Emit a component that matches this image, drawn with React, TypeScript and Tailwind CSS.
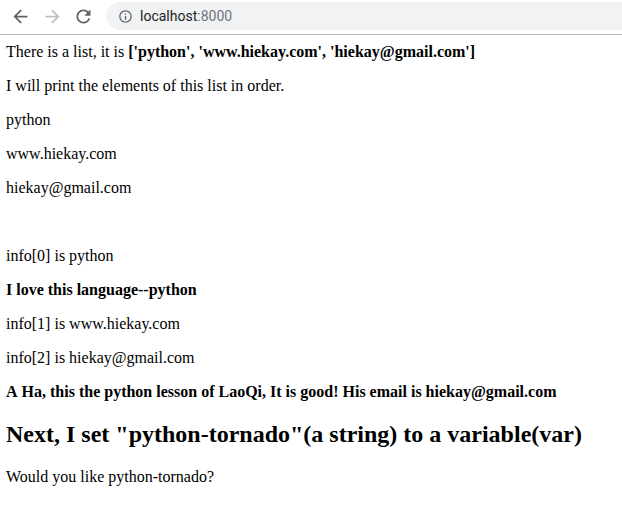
const serif = "font-['Liberation_Serif','Times_New_Roman',serif]";

const BACK = "M20 11H7.83l5.59-5.59L12 4l-8 8 8 8 1.41-1.41L7.83 13H20v-2z";
const FORWARD = "M12 4l-1.41 1.41L16.17 11H4v2h12.17l-5.58 5.59L12 20l8-8z";
const RELOAD =
  "M17.65 6.35C16.2 4.9 14.21 4 12 4c-4.42 0-7.99 3.58-7.99 8s3.57 8 7.99 8c3.73 0 6.84-2.55 7.73-6h-2.08c-.82 2.33-3.04 4-5.65 4-3.31 0-6-2.69-6-6s2.69-6 6-6c1.66 0 3.14.69 4.22 1.78L13 11h7V4l-2.35 2.35z";
const INFO =
  "M11 7h2v2h-2zm0 4h2v6h-2zm1-9C6.48 2 2 6.48 2 12s4.48 10 10 10 10-4.48 10-10S17.52 2 12 2zm0 18c-4.41 0-8-3.59-8-8s3.59-8 8-8 8 3.59 8 8-3.59 8-8 8z";

function Icon({ d, className }: { d: string; className: string }) {
  return (
    <svg viewBox="0 0 24 24" fill="currentColor" className={className}>
      <path d={d} />
    </svg>
  );
}

function Line({ children, bold }: { children: React.ReactNode; bold?: boolean }) {
  return <p className={`mb-4 h-[18px] leading-[18px] ${bold ? "font-bold" : ""}`}>{children}</p>;
}

export default function App() {
  return (
    <div className="h-[510px] w-[622px] overflow-hidden bg-white">
      {/* barra del navegador */}
      <div className="flex h-[35px] items-start border-b border-[#b6b8ba] bg-white">
        <div className="flex h-[32px] items-center pl-[10px]">
          <Icon d={BACK} className="h-[21px] w-[21px] text-[#5f6368]" />
          <Icon d={FORWARD} className="ml-[11px] h-[21px] w-[21px] text-[#bcbfc2]" />
          <Icon d={RELOAD} className="ml-[10px] h-[21px] w-[21px] text-[#5f6368]" />
        </div>
        <div className="ml-[12px] mt-[2px] flex h-[28px] flex-1 items-center rounded-l-full bg-[#f0f2f3] pl-[12px] font-['Roboto',sans-serif] text-[14px]">
          <Icon d={INFO} className="h-[15px] w-[15px] text-[#5f6368]" />
          <span className="ml-[7px] text-[#202124]">localhost</span>
          <span className="text-[#70757a]">:8000</span>
        </div>
      </div>
      <div className={`${serif} px-[6px] pt-[8px] text-[16px] text-black`}>
        <Line>
          There is a list, it is <b>['python', 'www.hiekay.com', 'hiekay@gmail.com']</b>
        </Line>
        <Line>I will print the elements of this list in order.</Line>
        <Line>python</Line>
        <Line>www.hiekay.com</Line>
        <Line>hiekay@gmail.com</Line>
        <Line>{"\u00a0"}</Line>
        <Line>info[0] is python</Line>
        <Line bold>I love this language--python</Line>
        <Line>info[1] is www.hiekay.com</Line>
        <Line>info[2] is hiekay@gmail.com</Line>
        <Line bold>
          <span className="[font-kerning:none]">A Ha, this the python lesson of LaoQi, It is good! His email is hiekay@gmail.com</span>
        </Line>
        <h2 className="mb-[20px] mt-[20px] text-[24px] leading-[27px] font-bold">
          Next, I set "python-tornado"(a string) to a variable(var)
        </h2>
        <Line>Would you like python-tornado?</Line>
      </div>
    </div>
  );
}
